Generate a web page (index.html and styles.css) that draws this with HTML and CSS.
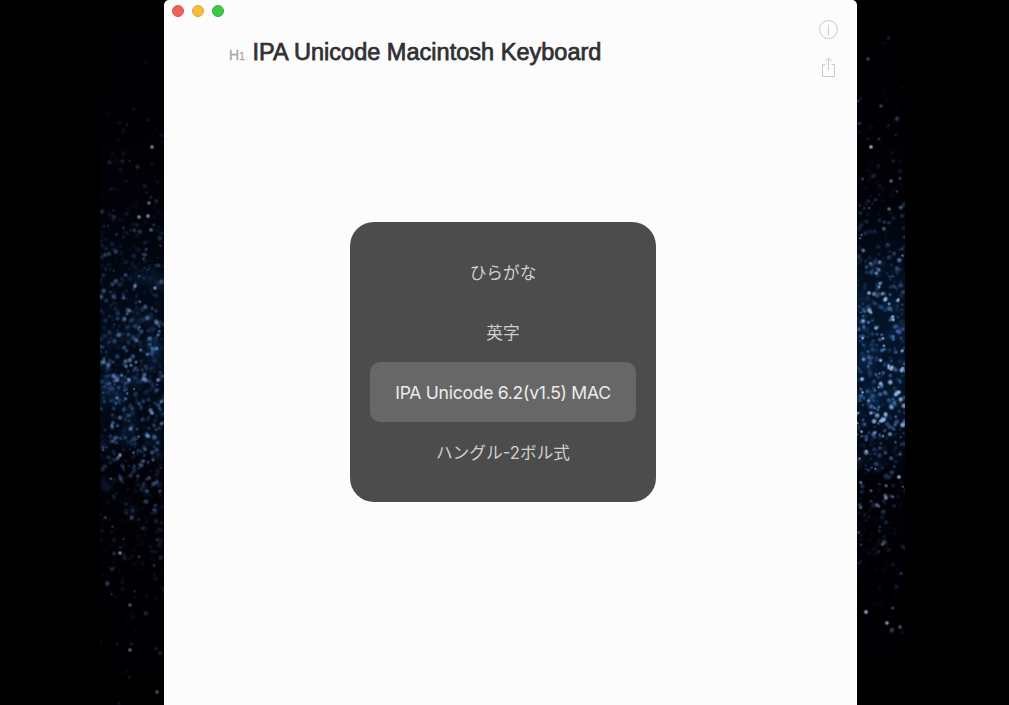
FILE: index.html
```html
<!DOCTYPE html>
<html lang="ja">
<head>
<meta charset="utf-8">
<title>IPA Unicode Macintosh Keyboard</title>
<link rel="stylesheet" href="styles.css">
</head>
<body>
<div class="desktop">
  <canvas class="sky sky-left" width="64" height="705"></canvas>
  <main class="window">
    <div class="lights">
      <span class="light close"></span>
      <span class="light minimize"></span>
      <span class="light zoom"></span>
    </div>
    <header class="heading">
      <span class="tag">H<span class="level">1</span></span>
      <h1 class="title">IPA Unicode Macintosh Keyboard</h1>
    </header>
    <div class="tools">
      <svg class="icon" width="20" height="20" viewBox="0 0 20 20">
        <circle cx="9.5" cy="9.5" r="9"/>
        <path d="M9.5 6.5V15.5M9.5 4V5.5"/>
      </svg>
      <svg class="icon" width="20" height="22" viewBox="0 0 20 22">
        <path d="M6.5 7.5H3.5V19.5H15.5V7.5H12.5M9.5 13V1.3M6.3 4.2L9.5 1L12.7 4.2"/>
      </svg>
    </div>
    <ul class="switcher">
      <li class="source">ひらがな</li>
      <li class="source">英字</li>
      <li class="source selected">IPA Unicode 6.2(v1.5) MAC</li>
      <li class="source">ハングル-2ボル式</li>
    </ul>
  </main>
  <canvas class="sky sky-right" width="48" height="705"></canvas>
</div>
<script src="stars.js"></script>
</body>
</html>
```
FILE: styles.css
```css
* { box-sizing: border-box; }
body {
  margin: 0;
  background: #000;
  overflow: hidden;
  font-family: "Liberation Sans", "Noto Sans CJK JP", sans-serif;
}
.desktop {
  display: flex;
  height: 705px;
  padding-left: 100px;
}
.sky { display: block; flex: none; }
.window {
  position: relative;
  flex: none;
  width: 693px;
  height: 705px;
  background: #fcfcfc;
  border-radius: 5px 5px 0 0;
}
.lights {
  display: flex;
  gap: 8px;
  padding: 5px 0 0 8px;
}
.light {
  width: 12px;
  height: 12px;
  border-radius: 50%;
  border: 1px solid;
}
.close { background: #ee6059; border-color: #d9534e; }
.minimize { background: #f6be3b; border-color: #dea733; }
.zoom { background: #3fc848; border-color: #34ad3b; }
.heading {
  display: flex;
  align-items: baseline;
  padding: 21px 0 0 65px;
}
.tag {
  width: 23.5px;
  font-size: 14px;
  line-height: 28px;
  color: #a8a8aa;
  -webkit-text-stroke: 0.3px #a8a8aa;
}
.level { font-size: 10px; }
.title {
  margin: 0;
  font-size: 23.5px;
  font-weight: 400;
  line-height: 28px;
  white-space: nowrap;
  color: #303032;
  letter-spacing: 0.02px;
  -webkit-text-stroke: 0.75px #303032;
}
.tools {
  position: absolute;
  top: 20px;
  right: 18px;
  display: flex;
  flex-direction: column;
  gap: 17px;
}
.icon {
  display: block;
  fill: none;
  stroke: #cacaca;
  stroke-width: 1;
}
.switcher {
  position: absolute;
  top: 222px;
  left: 186px;
  width: 306px;
  height: 280px;
  margin: 0;
  padding: 20px;
  list-style: none;
  background: #4c4c4c;
  border-radius: 24px;
}
.source {
  height: 60px;
  padding-top: 1px;
  border-radius: 10px;
  font: 400 16.7px/60px Inter, "Noto Sans CJK JP", sans-serif;
  text-align: center;
  white-space: nowrap;
  color: #cfcfcf;
}
.selected {
  background: #676767;
  color: #ececec;
  font-size: 17.6px;
  letter-spacing: -0.29px;
}
```
FILE: stars.js
```js
function generator(seed) {
  return function () {
    seed = (seed * 1664525 + 1013904223) >>> 0;
    return seed / 4294967296;
  };
}

function drawSky(selector, options) {
  const canvas = document.querySelector(selector);
  const ctx = canvas.getContext('2d');
  const random = generator(options.seed);
  const w = canvas.width, h = canvas.height;

  const haze = ctx.createLinearGradient(0, 0, 0, h);
  haze.addColorStop(0, '#000001');
  haze.addColorStop(0.28, '#010107');
  haze.addColorStop(0.44, options.haze);
  haze.addColorStop(0.57, options.haze);
  haze.addColorStop(0.68, '#010107');
  haze.addColorStop(1, '#000001');
  ctx.fillStyle = haze;
  ctx.fillRect(0, 0, w, h);

  function star(x, y, r, alpha, color) {
    const glow = ctx.createRadialGradient(x, y, 0, x, y, r);
    glow.addColorStop(0, `rgba(${color},${alpha})`);
    glow.addColorStop(0.4, `rgba(${color},${alpha * 0.6})`);
    glow.addColorStop(1, `rgba(${color},0)`);
    ctx.fillStyle = glow;
    ctx.fillRect(x - r, y - r, r * 2, r * 2);
  }

  for (let i = 0; i < options.count; i++) {
    const spread = (random() + random() + random() - 1.5) / 1.5;
    const y = options.center + spread * 350;
    const x = random() * w;
    const near = Math.exp(-Math.pow((y - options.center) / 115, 2));
    const weight = random();
    const alpha = (0.12 + weight * weight * 0.85) * (options.base + near * options.gain);
    const color = weight > 0.88 ? options.light : options.color;
    star(x, y, 1.7 + random() * 1.9, Math.min(alpha, 1), color);
    if (random() < 0.06 * near) star(x, y, 8 + random() * 6, 0.18, '30,80,140');
  }
  options.bright.forEach(([x, y, a = 0.8]) => star(x, y, 2.8, a, '165,200,245'));
}

drawSky('.sky-left', {
  seed: 41, count: 980, center: 382, base: 0.28, gain: 0.6, haze: '#020a18',
  color: '70,120,185', light: '120,165,225',
  bright: [[52, 147], [49, 203, 0.6], [39, 217], [48, 216], [51, 230, 0.5], [35, 286], [55, 288],
    [29, 380], [58, 380], [52, 413], [20, 455], [20, 553], [30, 605, 0.5], [30, 650, 0.6], [57, 692, 0.5]]
});
drawSky('.sky-right', {
  seed: 97, count: 640, center: 365, base: 0.36, gain: 0.85, haze: '#031328',
  color: '85,140,215', light: '165,205,250',
  bright: [[14, 147, 1], [11, 59, 0.4], [24, 106, 0.35], [34, 181, 0.6], [32, 209, 0.6], [12, 293, 1], [19, 328, 1],
    [28, 300, 0.9], [5, 379, 1], [14, 413, 0.9], [24, 421, 0.9], [42, 477, 1], [29, 498], [9, 612], [30, 623, 0.9], [43, 627, 0.5]]
});
```
